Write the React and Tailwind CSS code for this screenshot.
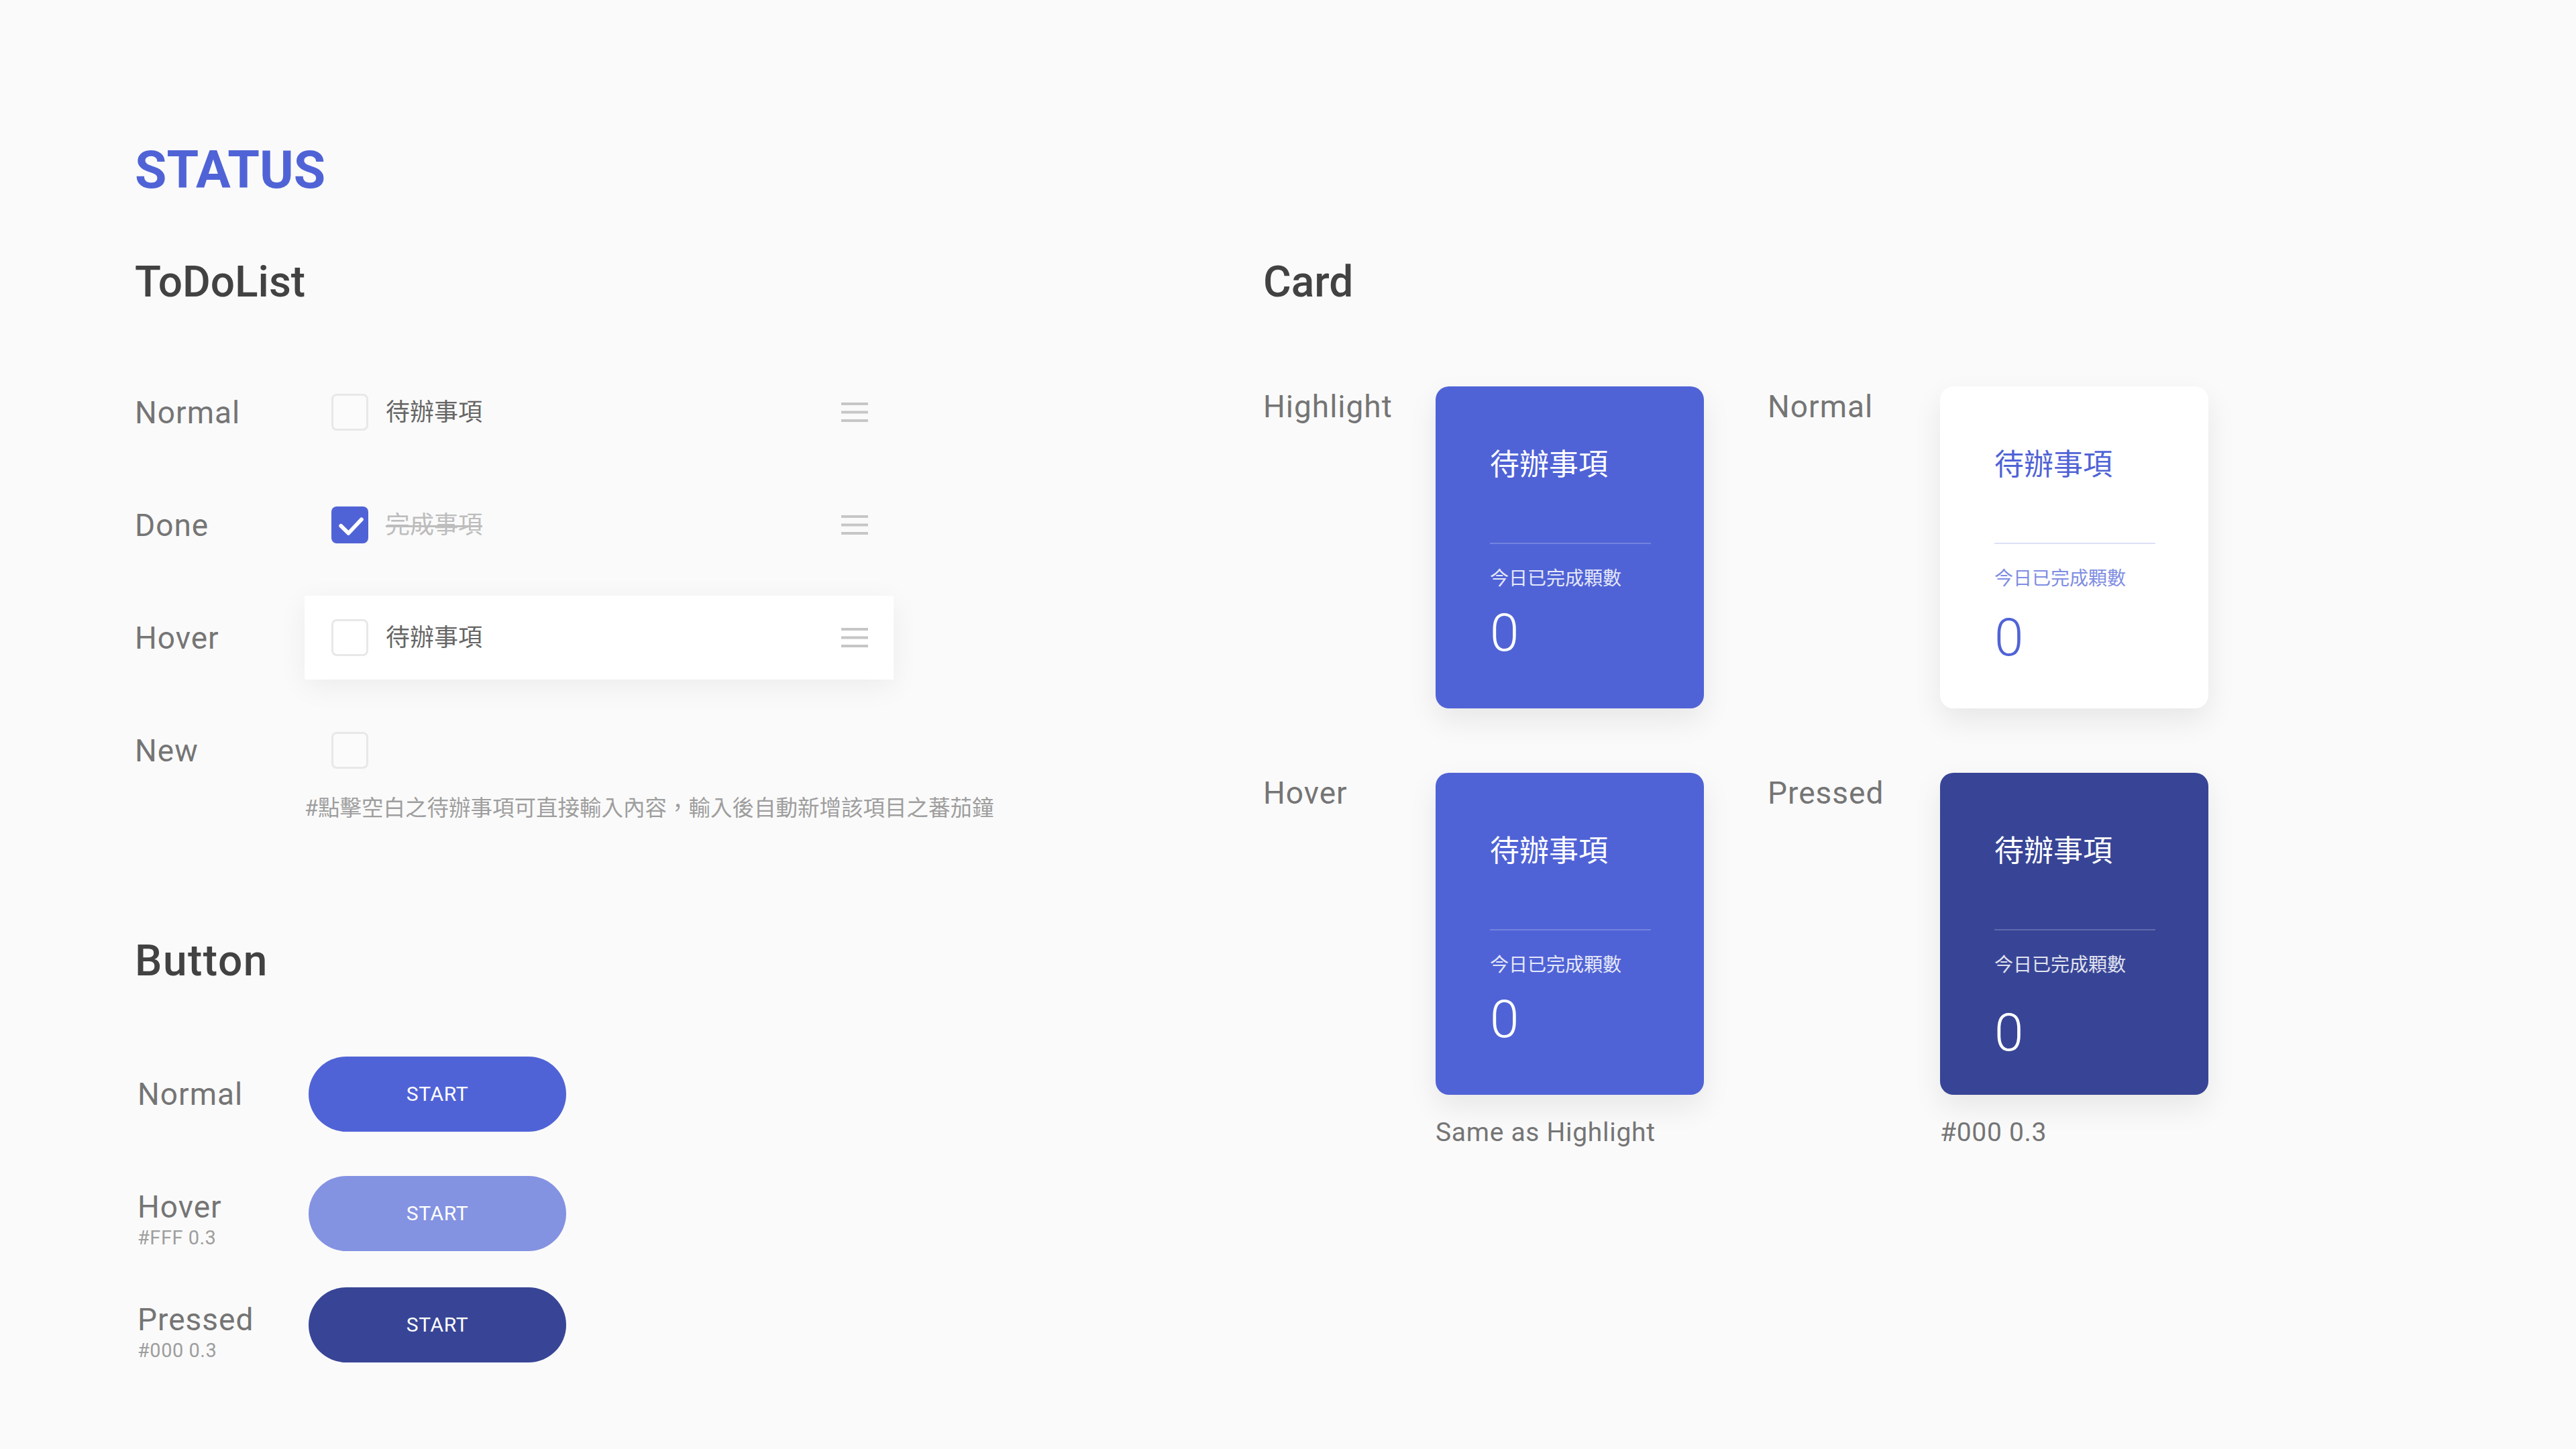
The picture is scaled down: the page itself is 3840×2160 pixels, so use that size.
import React from "react";

const BLUE = "bg-[#5063d6]";

function Checkbox({ checked, white }) {
  if (checked) {
    return (
      <div className="w-[55px] h-[55px] shrink-0 rounded-[8px] bg-[#5063d6] flex items-center justify-center">
        <svg width="55" height="55" viewBox="0 0 24 24" fill="none">
          <path
            d="M6.2 12.6 L11.1 17.4 L19.6 8.4"
            stroke="#fff"
            strokeWidth="2.5"
            strokeLinecap="round"
            strokeLinejoin="round"
          />
        </svg>
      </div>
    );
  }
  return (
    <div
      className={
        "w-[55px] h-[55px] shrink-0 rounded-[8px] border-[3px] border-[#e8e8e8] " +
        (white ? "bg-white" : "bg-[#fbfbfb]")
      }
    />
  );
}

function Handle() {
  return (
    <svg width="40" height="29" viewBox="0 0 40 29" className="ml-auto shrink-0">
      <rect x="0" y="0" width="40" height="4" fill="#c6c6c6" />
      <rect x="0" y="12.5" width="40" height="4" fill="#c6c6c6" />
      <rect x="0" y="25" width="40" height="4" fill="#c6c6c6" />
    </svg>
  );
}

function TodoRow({ label, text, done, hover, empty }) {
  return (
    <div className="flex items-center h-[125px]">
      <div className="w-[253px] shrink-0 text-[46px] leading-none text-[#757575] tracking-[1px]">
        {label}
      </div>
      <div
        className={
          "w-[878px] h-full flex items-center pl-[40px] pr-[38px] " +
          (hover ? "bg-white shadow-[0_10px_40px_rgba(0,0,0,0.06)]" : "")
        }
      >
        <Checkbox checked={done} white={hover} />
        {!empty && (
          <>
            <span
              className={
                "ml-[26px] text-[36px] leading-none " +
                (done ? "text-[#bdbdbd] line-through decoration-[3px]" : "text-[#666]")
              }
            >
              {text}
            </span>
            <Handle />
          </>
        )}
      </div>
    </div>
  );
}

function ButtonRow({ label, sub, color, mt, labelMt }) {
  return (
    <div className={"flex " + (sub ? "items-start" : "items-center") + " " + mt}>
      <div className={"w-[259px] shrink-0 pl-[4px] " + (labelMt || "")}>
        <div className="text-[46px] leading-[46px] text-[#757575] tracking-[1px]">{label}</div>
        {sub && (
          <div className="mt-[10px] text-[29px] leading-[27px] text-[#9e9e9e] tracking-[0.5px]">
            {sub}
          </div>
        )}
      </div>
      <button
        className={
          "w-[384px] h-[112px] rounded-full text-white text-[30px] leading-none tracking-[0.6px] " +
          color
        }
      >
        START
      </button>
    </div>
  );
}

function StatCard({ variant }) {
  const white = variant === "normal";
  const bg =
    variant === "pressed" ? "bg-[#384596]" : white ? "bg-white" : BLUE;
  const numMt =
    variant === "normal" ? "mt-[35px]" : variant === "pressed" ? "mt-[48px]" : "mt-[28px]";
  return (
    <div
      className={
        "w-[400px] h-[480px] rounded-[20px] pl-[81px] pr-[79px] pt-[95px] flex flex-col shadow-[0_18px_44px_rgba(0,0,0,0.08)] " +
        bg
      }
    >
      <div
        className={
          "text-[44px] leading-[44px] " + (white ? "text-[#5063d6]" : "text-white")
        }
      >
        待辦事項
      </div>
      <div className={"mt-[94px] h-[2px] " + (white ? "bg-[#dde1f7]" : "bg-white/20")} />
      <div
        className={
          "mt-[38px] text-[28px] leading-[28px] " +
          (white ? "text-[#7f8de2]" : "text-white/85")
        }
      >
        今日已完成顆數
      </div>
      <div
        className={
          numMt +
          " text-[78px] leading-[78px] font-light " +
          (white ? "text-[#5063d6]" : "text-white")
        }
      >
        0
      </div>
    </div>
  );
}

function CardCell({ label, variant, caption }) {
  return (
    <div className="flex items-start">
      <div className="w-[257px] shrink-0 text-[46px] leading-[60px] text-[#757575] tracking-[1px]">
        {label}
      </div>
      <div className="flex flex-col">
        <StatCard variant={variant} />
        {caption && (
          <div className="mt-[37px] text-[39px] leading-[38px] text-[#757575] tracking-[0.7px]">
            {caption}
          </div>
        )}
      </div>
    </div>
  );
}

export default function App() {
  return (
    <div className="min-h-screen w-full bg-[#fafafa] pl-[201px] pt-[216px] font-['Roboto','Noto_Sans_CJK_TC',sans-serif]">
      <h1 className="text-[77px] leading-none font-bold text-[#5063d6]">STATUS</h1>

      <div className="flex mt-[96px]">
        {/* left column */}
        <div className="w-[1682px] shrink-0">
          <h2 className="text-[64px] leading-none font-medium text-[#424242]">ToDoList</h2>

          <div className="mt-[99px] flex flex-col gap-[43px]">
            <TodoRow label="Normal" text="待辦事項" />
            <TodoRow label="Done" text="完成事項" done />
            <TodoRow label="Hover" text="待辦事項" hover />
            <TodoRow label="New" empty />
          </div>
          <p className="ml-[253px] mt-[4px] text-[32.5px] leading-[40px] text-[#9e9e9e]">
            #點擊空白之待辦事項可直接輸入內容，輸入後自動新增該項目之蕃茄鐘
          </p>

          <h2 className="mt-[176px] text-[64px] leading-none font-medium text-[#424242] tracking-[1.5px]">
            Button
          </h2>
          <ButtonRow label="Normal" color="bg-[#5063d6]" mt="mt-[110px]" />
          <ButtonRow
            label="Hover"
            sub="#FFF 0.3"
            color="bg-[#8492e2]"
            mt="mt-[66px]"
            labelMt="mt-[23px]"
          />
          <ButtonRow
            label="Pressed"
            sub="#000 0.3"
            color="bg-[#384596]"
            mt="mt-[54px]"
            labelMt="mt-[25px]"
          />
        </div>

        {/* right column */}
        <div>
          <h2 className="text-[64px] leading-none font-medium text-[#424242]">Card</h2>
          <div className="mt-[123px] flex flex-col gap-[96px]">
            <div className="flex gap-[95px]">
              <CardCell label="Highlight" variant="highlight" />
              <CardCell label="Normal" variant="normal" />
            </div>
            <div className="flex gap-[95px]">
              <CardCell label="Hover" variant="highlight" caption="Same as Highlight" />
              <CardCell label="Pressed" variant="pressed" caption="#000 0.3" />
            </div>
          </div>
        </div>
      </div>
    </div>
  );
}
